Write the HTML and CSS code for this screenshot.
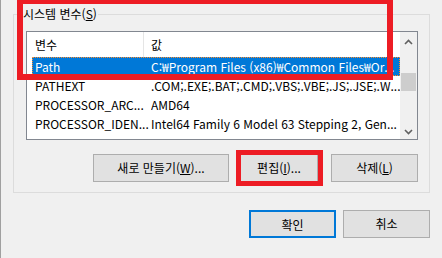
FILE: index.html
```html
<!DOCTYPE html>
<html lang="ko">
<head>
<meta charset="utf-8">
<link rel="stylesheet" href="styles.css">
</head>
<body>
<div class="dialog">
  <div class="group">
    <div class="group-title">시스템 변수(<u>S</u>)</div>
    <div class="list">
      <div class="list-main">
        <div class="list-header">
          <div class="hcell h1">변수</div>
          <div class="hcell h2">값</div>
        </div>
        <div class="row selected"><span class="c1">Path</span><span class="c2">C:₩Program Files (x86)₩Common Files₩Or...</span></div>
        <div class="row"><span class="c1">PATHEXT</span><span class="c2">.COM;.EXE;.BAT;.CMD;.VBS;.VBE;.JS;.JSE;.W...</span></div>
        <div class="row"><span class="c1">PROCESSOR_ARC...</span><span class="c2">AMD64</span></div>
        <div class="row"><span class="c1">PROCESSOR_IDEN...</span><span class="c2">Intel64 Family 6 Model 63 Stepping 2, Gen...</span></div>
      </div>
      <div class="scrollbar">
        <div class="sb-btn"><svg width="9" height="6" viewBox="0 0 9 6"><path d="M1 5 L4.5 1.5 L8 5" fill="none" stroke="#606060" stroke-width="1.6"/></svg></div>
        <div class="sb-track"><div class="sb-thumb"></div></div>
        <div class="sb-btn"><svg width="9" height="6" viewBox="0 0 9 6"><path d="M1 1 L4.5 4.5 L8 1" fill="none" stroke="#606060" stroke-width="1.6"/></svg></div>
      </div>
    </div>
    <div class="btn-row">
      <button class="btn btn-new">새로 만들기(<u>W</u>)...</button>
      <button class="btn btn-edit">편집(<u>I</u>)...</button>
      <button class="btn btn-del">삭제(<u>L</u>)</button>
    </div>
  </div>
  <div class="footer">
    <button class="btn btn-ok">확인</button>
    <button class="btn btn-cancel">취소</button>
  </div>
  <div class="mark mark-group"></div>
  <div class="mark mark-edit"></div>
</div>
</body>
</html>
```
FILE: styles.css
```css
* { box-sizing: border-box; }
html, body { margin: 0; padding: 0; }
body {
  width: 442px;
  height: 258px;
  overflow: hidden;
  background: #f0f0f0;
  font-family: "Noto Sans CJK KR", "Noto Sans", sans-serif;
  font-size: 12px;
  color: #000;
}
.dialog {
  position: relative;
  width: 442px;
  height: 258px;
  border-left: 1px solid #a0a0a0;
  background: #f0f0f0;
  overflow: hidden;
}
.group {
  margin: 14px 12px 0 12px;
  height: 179px;
  border: 1px solid #dcdcdc;
  padding: 0 11px 0 12px;
}
.group-title {
  width: fit-content;
  margin: -9px 0 0 -4px;
  padding: 0 1px;
  height: 16px;
  line-height: 16px;
  background: #f0f0f0;
}
.list {
  margin-top: 9px;
  height: 109px;
  border: 1px solid #828790;
  background: #fff;
  display: flex;
}
.list-main {
  flex: 1;
  overflow: hidden;
}
.list-header {
  display: flex;
  height: 25px;
  line-height: 25px;
}
.hcell.h1 {
  width: 117px;
  padding-left: 8px;
  border-right: 1px solid #e5e5e5;
}
.hcell.h2 {
  flex: 1;
  padding-left: 7px;
}
.row {
  display: flex;
  height: 19px;
  line-height: 19px;
  margin-left: 5px;
  white-space: nowrap;
}
.row .c1 {
  width: 119px;
  padding-left: 3px;
  flex: none;
}
.row .c2 {
  flex: 1;
  overflow: hidden;
}
.row.selected {
  background: #0078d7;
  color: #fff;
  outline: 1px dotted #ff8c2a;
  outline-offset: -1px;
}
.scrollbar {
  width: 17px;
  flex: none;
  background: #f0f0f0;
  display: flex;
  flex-direction: column;
}
.sb-btn {
  height: 17px;
  display: flex;
  align-items: center;
  justify-content: center;
  padding-top: 2px;
}
.sb-track {
  flex: 1;
}
.sb-thumb {
  margin: 24px 1px 0 1px;
  height: 18px;
  background: #cdcdcd;
}
.btn {
  height: 28px;
  padding: 0;
  border: 1px solid #adadad;
  background: #e1e1e1;
  font-family: "Noto Sans CJK KR", "Noto Sans", sans-serif;
  font-size: 12px;
  color: #000;
  line-height: 26px;
}
.btn-row {
  display: flex;
  justify-content: flex-end;
  margin-top: 14px;
}
.btn-new { width: 136px; }
.btn-edit { width: 78px; margin-left: 11px; }
.btn-del { width: 87px; margin-left: 13px; }
.footer {
  display: flex;
  justify-content: flex-end;
  margin-top: 17px;
  padding-right: 12px;
  gap: 7px;
}
.btn-ok, .btn-cancel { width: 87px; }
.btn-ok { border: 2px solid #0078d7; }
.mark {
  position: absolute;
  border: solid #ed1c24;
}
.mark-group {
  left: 16px;
  top: -2px;
  width: 376px;
  height: 82px;
  border-width: 6px;
}
.mark-edit {
  left: 235px;
  top: 150px;
  width: 87px;
  height: 36px;
  border-width: 5px;
}
```
